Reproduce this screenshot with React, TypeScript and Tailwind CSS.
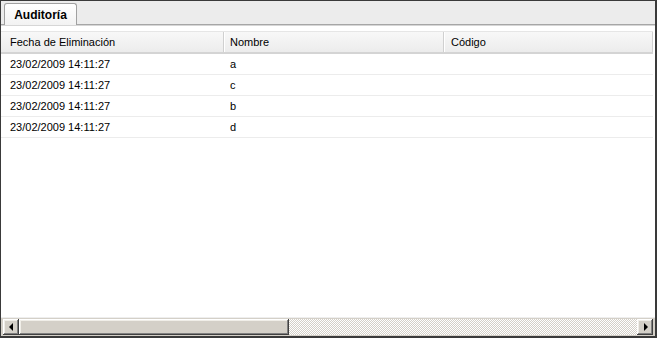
import React from "react";

const rows = [
  { fecha: "23/02/2009 14:11:27", nombre: "a", codigo: "" },
  { fecha: "23/02/2009 14:11:27", nombre: "c", codigo: "" },
  { fecha: "23/02/2009 14:11:27", nombre: "b", codigo: "" },
  { fecha: "23/02/2009 14:11:27", nombre: "d", codigo: "" },
];

const bevel =
  "bg-[#d4d0c8] shadow-[inset_-1px_-1px_#404040,inset_1px_1px_#ffffff,inset_-2px_-2px_#808080,inset_2px_2px_#f0eee8]";

function ScrollButton({ dir }: { dir: "left" | "right" }) {
  return (
    <div className={`w-[16px] h-[16px] flex items-center justify-center shrink-0 ${bevel}`}>
      {dir === "left" ? (
        <div className="w-0 h-0 border-y-[4px] border-y-transparent border-r-[4px] border-r-black mr-[1px]" />
      ) : (
        <div className="w-0 h-0 border-y-[4px] border-y-transparent border-l-[4px] border-l-black ml-[1px]" />
      )}
    </div>
  );
}

export default function App() {
  const cols = ["w-[223px]", "w-[220px]", "flex-1"];
  const pads = ["pl-[9px]", "pl-[6px]", "pl-[7px]"];
  const headers = ["Fecha de Eliminación", "Nombre", "Código"];

  return (
    <div className="w-[658px] h-[339px] bg-white font-['Liberation_Sans',Arial,sans-serif] text-[11px] text-black">
      <div className="w-[657px] h-[338px] border-t border-l border-r-2 border-b-2 border-[#3a3a3a] flex flex-col">
        {/* tab strip */}
        <div className="h-[24px] bg-[#ececec] border-b border-[#a6a6a6] flex items-end pl-[3px] shrink-0">
          <div className="h-[22px] w-[73px] -mb-[1px] rounded-t-[3px] border border-b-0 border-[#a0a0a0] bg-gradient-to-b from-[#ffffff] to-[#f2f2f2] flex items-center justify-center font-bold text-[12px]">
            Auditoría
          </div>
        </div>
        <div className="h-[1px] bg-[#d6d6d6] shrink-0" />

        {/* grid */}
        <div className="flex-1 flex flex-col pt-[5px] pr-[2px] bg-white">
          <div className="flex h-[23px] border-t border-[#e6e6e6] border-b-2 border-b-[#d4d4d4] bg-gradient-to-b from-[#f8f8f8] to-[#ececec] shrink-0">
            {headers.map((h, i) => (
              <div
                key={h}
                className={`${cols[i]} ${pads[i]} flex items-center ${
                  i < 2 ? "border-r border-[#d0d0d0] shadow-[1px_0_#ffffff]" : "border-r border-[#d0d0d0]"
                }`}
              >
                {h}
              </div>
            ))}
          </div>
          {rows.map((r, idx) => (
            <div key={idx} className="flex h-[21px] border-b border-[#ececec] shrink-0">
              <div className={`${cols[0]} ${pads[0]} flex items-center`}>{r.fecha}</div>
              <div className={`${cols[1]} ${pads[1]} flex items-center`}>{r.nombre}</div>
              <div className={`${cols[2]} ${pads[2]} flex items-center`}>{r.codigo}</div>
            </div>
          ))}
          <div className="flex-1" />
        </div>

        {/* horizontal scrollbar */}
        <div className="h-[19px] bg-[#d4d0c8] border-t border-[#eeeeee] flex items-center px-[2px] shrink-0">
          <ScrollButton dir="left" />
          <div className={`w-[270px] h-[16px] shrink-0 ${bevel}`} />
          <div className="flex-1 h-[16px] [background:repeating-conic-gradient(#d4d0c8_0_25%,#ffffff_0_50%)_0_0/2px_2px]" />
          <ScrollButton dir="right" />
        </div>
      </div>
    </div>
  );
}
